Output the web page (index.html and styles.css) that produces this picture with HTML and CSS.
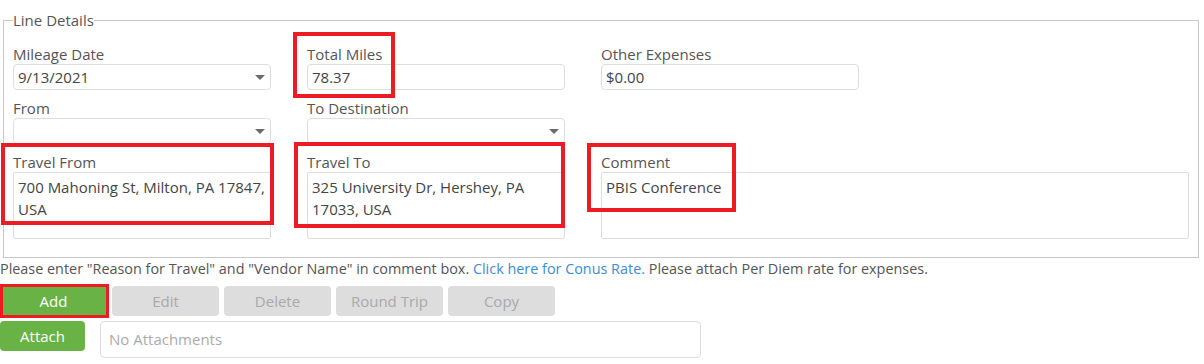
FILE: index.html
```html
<!DOCTYPE html>
<html lang="en">
<head>
    <meta charset="UTF-8">
    <title>Line Details</title>
    <link rel="stylesheet" href="styles.css">
</head>
<body>
    <div class="page">
        <fieldset class="line-details">
            <legend>Line Details</legend>
            <div class="field-grid">
                <div class="field">
                    <label>Mileage Date</label>
                    <div class="select-box">9/13/2021<span class="caret"></span></div>
                </div>
                <div class="field">
                    <label>Total Miles</label>
                    <div class="text-box">78.37</div>
                </div>
                <div class="field">
                    <label>Other Expenses</label>
                    <div class="text-box">$0.00</div>
                </div>

                <div class="field">
                    <label>From</label>
                    <div class="select-box"><span class="caret"></span></div>
                </div>
                <div class="field">
                    <label>To Destination</label>
                    <div class="select-box"><span class="caret"></span></div>
                </div>
                <div class="field"></div>

                <div class="field">
                    <label>Travel From</label>
                    <div class="area-box">700 Mahoning St, Milton, PA 17847, USA</div>
                </div>
                <div class="field">
                    <label>Travel To</label>
                    <div class="area-box">325 University Dr, Hershey, PA 17033, USA</div>
                </div>
                <div class="field">
                    <label>Comment</label>
                    <div class="area-box wide">PBIS Conference</div>
                </div>
            </div>
        </fieldset>

        <p class="note">Please enter "Reason for Travel" and "Vendor Name" in comment box. <a href="#">Click here for Conus Rate.</a> Please attach Per Diem rate for expenses.</p>

        <div class="button-row">
            <button class="btn btn-green">Add</button>
            <button class="btn" disabled>Edit</button>
            <button class="btn" disabled>Delete</button>
            <button class="btn" disabled>Round Trip</button>
            <button class="btn" disabled>Copy</button>
        </div>

        <div class="attach-row">
            <button class="btn btn-green btn-attach">Attach</button>
            <div class="attach-box">No Attachments</div>
        </div>

        <!-- red highlight boxes -->
        <div class="mark mark-miles"></div>
        <div class="mark mark-from"></div>
        <div class="mark mark-to"></div>
        <div class="mark mark-comment"></div>
        <div class="mark mark-add"></div>
    </div>
</body>
</html>
```

FILE: styles.css
```css
/* 基本样式 */
body {
    margin: 0;
    padding: 0;
    background-color: #fff;
    font-family: "Open Sans", "Noto Sans", sans-serif;
    font-size: 15px;
    color: #444;
}
.page {
    position: relative;
    box-sizing: border-box;
    width: 1204px;
    height: 364px;
    padding-top: 10px;
}

/* fieldset */
.line-details {
    margin: 0 5px 0 3px;
    padding: 13px 9px 18px 9px;
    border: 1px solid #c8c8c8;
}
.line-details legend {
    padding: 0;
    line-height: 20px;
    color: #555;
}
.field-grid {
    display: grid;
    grid-template-columns: 258px 258px 1fr;
    column-gap: 36px;
    row-gap: 7px;
}
.field label {
    display: block;
    line-height: 21px;
    padding-top: 1px;
    margin-bottom: -1px;
    color: #555;
}
.select-box,
.text-box {
    position: relative;
    height: 26px;
    line-height: 24px;
    padding: 0 4px;
    border: 1px solid #ddd;
    border-radius: 4px;
    box-sizing: border-box;
    width: 258px;
}
.caret {
    position: absolute;
    right: 5px;
    top: 10px;
    border-left: 5px solid transparent;
    border-right: 5px solid transparent;
    border-top: 5px solid #6b6b6b;
}
.area-box {
    height: 67px;
    box-sizing: border-box;
    border: 1px solid #ddd;
    border-radius: 2px;
    padding: 3px 4px;
    line-height: 22px;
    width: 258px;
}
.area-box.wide {
    width: 100%;
}

.note {
    margin: 1px 0 0 0;
    font-size: 14.4px;
    line-height: 20px;
    color: #555;
}
.note a {
    color: #3d8bd1;
    text-decoration: none;
}

/* 按钮 */
.button-row {
    display: flex;
    gap: 5px;
    margin-top: 7px;
}
.btn {
    width: 107px;
    height: 30px;
    border: none;
    border-radius: 4px;
    background-color: #ddd;
    color: #a9a9a9;
    font-family: inherit;
    font-size: 15px;
    padding: 0;
}
.btn-green {
    background-color: #68b246;
    color: #fff;
}
.attach-row {
    display: flex;
    gap: 15px;
    margin-top: 5px;
}
.btn-attach {
    width: 85px;
}
.attach-box {
    width: 601px;
    height: 37px;
    box-sizing: border-box;
    border: 1px solid #ddd;
    border-radius: 4px;
    padding: 0 8px;
    line-height: 35px;
    color: #aaa;
}

/* red highlight */
.mark {
    position: absolute;
    border: 4px solid #ed1c24;
    box-sizing: border-box;
}
.mark-miles { left: 293px; top: 32px; width: 102px; height: 66px; }
.mark-from { left: 1px; top: 143px; width: 273px; height: 82px; }
.mark-to { left: 294px; top: 142px; width: 271px; height: 86px; }
.mark-comment { left: 587px; top: 143px; width: 149px; height: 69px; }
.mark-add { left: 0; top: 284px; width: 109px; height: 34px; border-width: 3px; }
```
